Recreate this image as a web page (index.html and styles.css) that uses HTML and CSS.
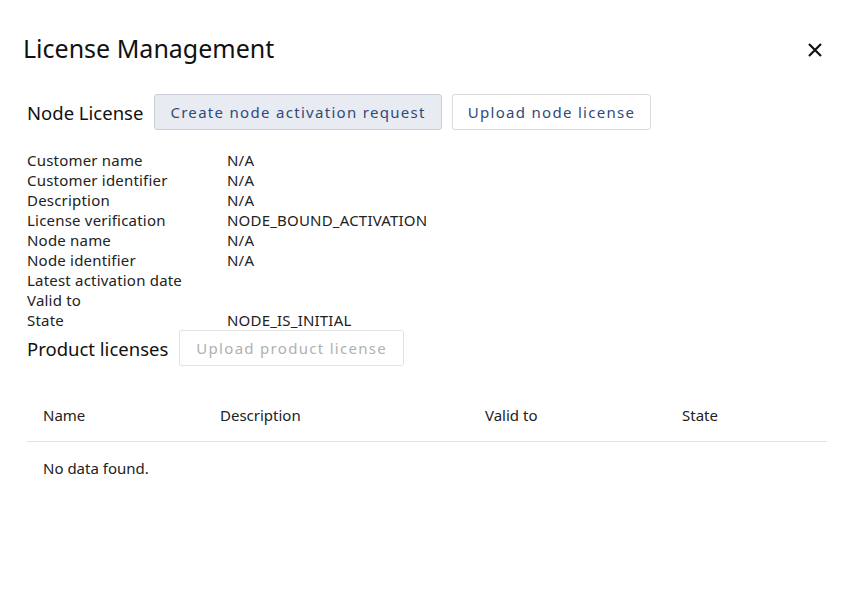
FILE: index.html
```html
<!DOCTYPE html>
<html lang="en">

<head>
  <meta charset="UTF-8">
  <meta name="viewport" content="width=device-width, initial-scale=1.0">
  <title>License Management</title>
  <link rel="stylesheet" href="styles.css">
</head>

<body>
  <div class="dialog">
    <div class="dialog-header">
      <h1>License Management</h1>
      <button class="close" aria-label="Close">
        <svg width="16" height="16" viewBox="0 0 16 16">
          <path d="M2 2 L14 14 M14 2 L2 14" stroke="#111" stroke-width="2.2" fill="none"/>
        </svg>
      </button>
    </div>

    <div class="dialog-body">
      <div class="section-title">
        <h2>Node License</h2>
        <button class="btn btn-active">Create node activation request</button>
        <button class="btn">Upload node license</button>
      </div>

      <div class="details">
        <span>Customer name</span><span>N/A</span>
        <span>Customer identifier</span><span>N/A</span>
        <span>Description</span><span>N/A</span>
        <span>License verification</span><span>NODE_BOUND_ACTIVATION</span>
        <span>Node name</span><span>N/A</span>
        <span>Node identifier</span><span>N/A</span>
        <span>Latest activation date</span><span></span>
        <span>Valid to</span><span></span>
        <span>State</span><span>NODE_IS_INITIAL</span>
      </div>

      <div class="section-title">
        <h2>Product licenses</h2>
        <button class="btn btn-wide" disabled>Upload product license</button>
      </div>

      <table class="licenses">
        <thead>
          <tr>
            <th class="col-name">Name</th>
            <th class="col-desc">Description</th>
            <th class="col-valid">Valid to</th>
            <th>State</th>
          </tr>
        </thead>
        <tbody>
          <tr>
            <td colspan="4">No data found.</td>
          </tr>
        </tbody>
      </table>
    </div>
  </div>
</body>

</html>
```

FILE: styles.css
```css
body {
  font-family: "Noto Sans", sans-serif;
  background-color: #fff;
  color: #222;
  margin: 0;
  padding: 0;
}

.dialog {
  padding: 28px 30px 0 23px;
}

.dialog-header {
  display: flex;
  align-items: center;
  justify-content: space-between;
  height: 40px;
}

h1 {
  margin: 0;
  font-size: 25px;
  font-weight: 400;
  color: #111;
}

.close {
  border: none;
  background: none;
  padding: 0;
  margin-top: 4px;
  width: 16px;
  height: 16px;
  cursor: pointer;
}

.dialog-body {
  padding-left: 4px;
}

.section-title {
  display: flex;
  align-items: center;
  gap: 10px;
}

.section-title h2 {
  margin-right: 1px;
}

.dialog-body > .section-title:first-child {
  margin-top: 26px;
}

h2 {
  margin: 0;
  font-size: 18.5px;
  font-weight: 400;
  color: #111;
}

.btn {
  font-family: inherit;
  font-size: 15px;
  letter-spacing: 1.3px;
  height: 36px;
  padding: 0 15px;
  border: 1px solid #d8dbe0;
  border-radius: 3px;
  background-color: #fff;
  color: #2f4a7a;
  cursor: pointer;
}

.btn-wide {
  padding: 0 16px;
}

.btn-active {
  background-color: #e8ecf2;
  border-color: #c9ced6;
}

.btn:disabled {
  color: #b0b0b0;
  border-color: #e2e2e2;
  cursor: default;
}

.details {
  display: grid;
  grid-template-columns: 200px 1fr;
  font-size: 15px;
  letter-spacing: 0.2px;
  line-height: 20px;
  margin: 20px 0 0;
}

.licenses {
  width: 800px;
  margin-top: 23px;
  border-collapse: collapse;
  font-size: 15px;
}

.licenses th {
  text-align: left;
  font-weight: 400;
  height: 52px;
  padding: 0 16px;
  border-bottom: 1px solid #e2e2e2;
}

.col-name {
  width: 145px;
}

.col-desc {
  width: 233px;
}

.col-valid {
  width: 165px;
}

.licenses td {
  padding: 16px 16px;
}
```
